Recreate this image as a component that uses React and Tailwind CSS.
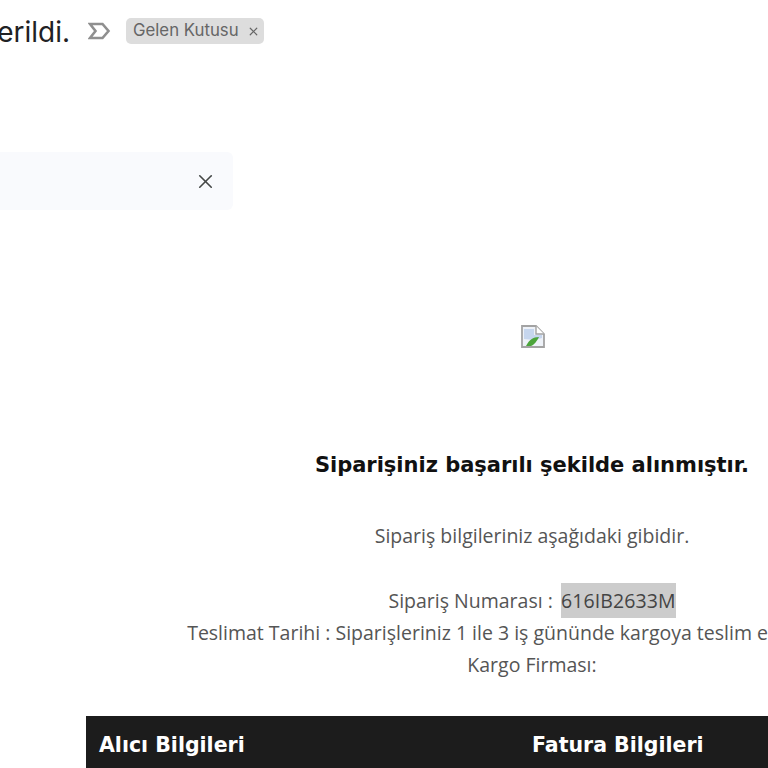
import { X } from 'lucide-react'

const bodyFont = "font-['Open_Sans','Noto_Sans',sans-serif]"

// Chrome's broken image placeholder
const BrokenImage = () => (
  <svg width="24" height="23" viewBox="0 0 24 23" className="block">
    <path d="M1 1 H15 L23 9 V22 H1 Z" fill="#eef2f8" stroke="#a3a3a3" strokeWidth="1.8" />
    <path d="M15 1 V9 H23" fill="#fff" stroke="#a3a3a3" strokeWidth="1.4" />
    <path d="M3 4 H13 V10 H21 V13 L14 15 L3 14 Z" fill="#c6d6ee" />
    <path d="M5 21 C8 15 12 12 18 12 C16 16 13 20 10 21 Z" fill="#4ca53b" />
  </svg>
)

const TagIcon = () => (
  <svg width="23" height="18" viewBox="0 0 23 18" fill="none" className="block">
    <path d="M2 2 H14.5 L20.5 9 L14.5 16 H2 L7.5 9 Z" stroke="#8f8f8f" strokeWidth="2.6" strokeLinejoin="miter" />
  </svg>
)

export default function App() {
  return (
    <div className={`w-[768px] h-[768px] overflow-hidden bg-white ${bodyFont}`}>
      {/* mail subject row, cut off by the crop on the left */}
      <div className="w-[264px] h-[45px] pt-[17px] flex items-center justify-end overflow-hidden whitespace-nowrap">
        <div className="shrink-0 flex items-center gap-[18px]">
          <span className="mt-[2px] font-['Inter',sans-serif] text-[28px] leading-[32px] text-[#202124]">Siparişiniz verildi.</span>
          <div className="flex items-center gap-[15px]">
            <TagIcon />
            <div className="flex items-center gap-[8px] h-[26px] w-[138px] rounded-[5px] bg-[#dddddd] pl-[7px] text-[#666666]">
              <span className="font-['Inter',sans-serif] text-[16.8px]">Gelen Kutusu</span>
              <X size={13} strokeWidth={2.2} className="text-[#666666]" />
            </div>
          </div>
        </div>
      </div>

      {/* notice bar */}
      <div className="mt-[107px] w-[233px] h-[58px] rounded-r-[6px] bg-[#f9fafd] flex items-center justify-end pr-[16px]">
        <X size={23} strokeWidth={1.7} className="text-[#444746]" />
      </div>

      {/* mail body */}
      <div className="ml-[86px] w-[892px] flex flex-col items-center text-[19.5px] text-[#555555]">
        <div className="mt-[115px] h-[23px] pl-[2px]">
          <BrokenImage />
        </div>
        <h1 className="mt-[102px] font-['DejaVu_Sans',sans-serif] font-bold text-[21px] tracking-[-0.02px] leading-[30px] text-[#111111]">
          Siparişiniz başarılı şekilde alınmıştır.
        </h1>
        <p className="mt-[40px] leading-[32px]">Sipariş bilgileriniz aşağıdaki gibidir.</p>
        <p className="mt-[33px] leading-[32px]">
          Sipariş Numarası : <span className="ml-[3px] bg-[#cccccc] text-[#444444] py-[4px] tracking-[0.1px]">616IB2633M</span>
        </p>
        <p className="leading-[32px] whitespace-nowrap">Teslimat Tarihi : Siparişleriniz 1 ile 3 iş gününde kargoya teslim edilmektedir.</p>
        <p className="leading-[32px]">Kargo Firması:</p>

        <div className="mt-[35px] w-full h-[60px] bg-[#1c1c1c] grid grid-cols-[433px_1fr] pl-[13px] pt-[14px] font-['DejaVu_Sans',sans-serif] font-bold text-[20.5px] leading-[30px] text-white">
          <span>Alıcı Bilgileri</span>
          <span>Fatura Bilgileri</span>
        </div>
      </div>
    </div>
  )
}
